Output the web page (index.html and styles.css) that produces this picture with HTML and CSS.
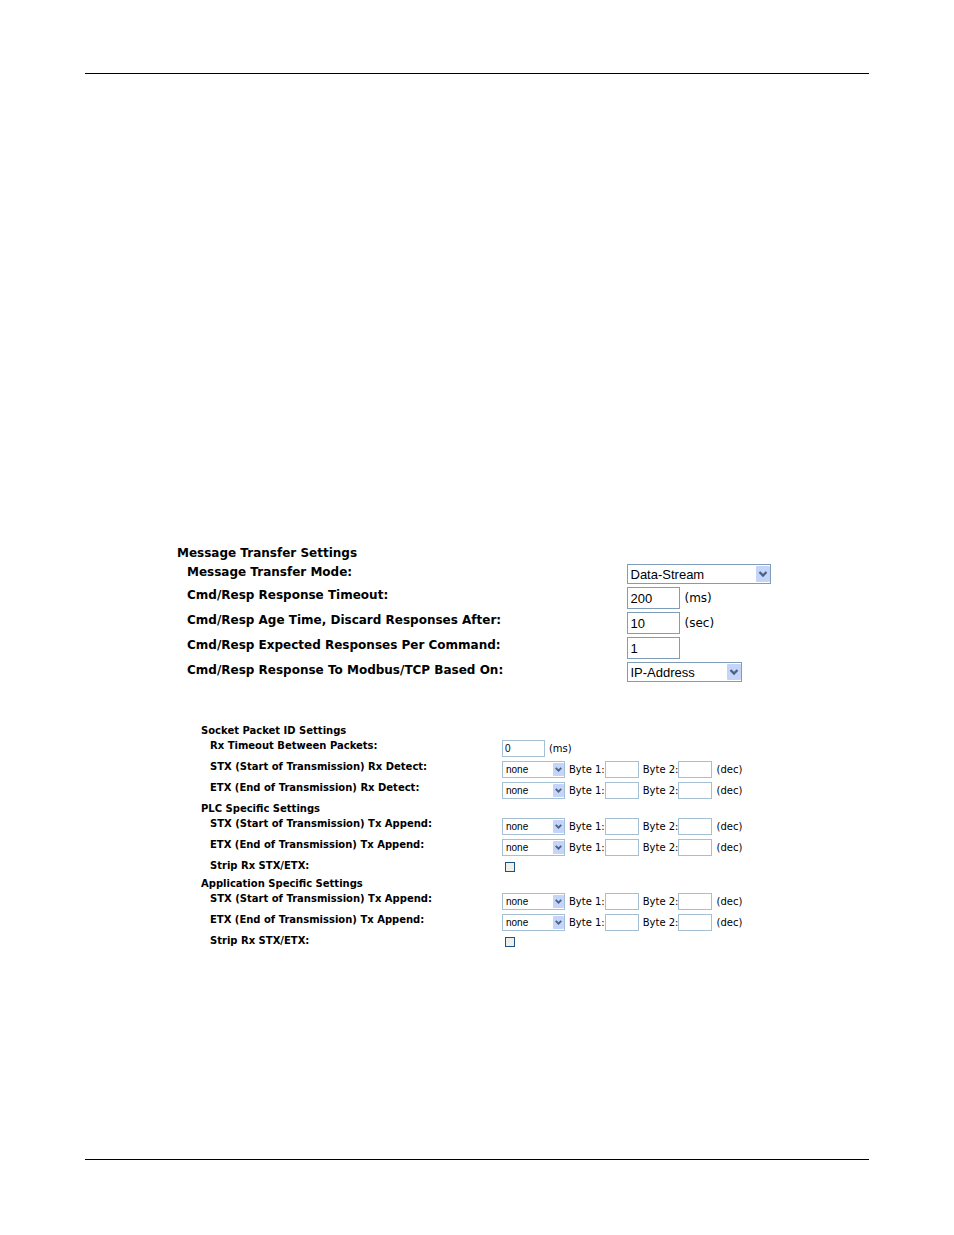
FILE: index.html
```html
<!DOCTYPE html>
<html lang="en">
<head>
    <meta charset="UTF-8">
    <meta name="viewport" content="width=device-width, initial-scale=1.0">
    <title>Message Transfer Settings</title>
    <link rel="stylesheet" href="styles.css">
</head>
<body>
    <svg width="0" height="0" class="symbols" aria-hidden="true">
        <symbol id="arrow" viewBox="0 0 14 16" preserveAspectRatio="none">
            <rect x="0" y="0" width="14" height="16" rx="1" fill="#c5d5fa"/>
            <path d="M3.5 6l3.5 3.5L10.500 6" fill="none" stroke="#4d6185" stroke-width="2.4"/>
        </symbol>
    </svg>

    <form class="page">
        <!-- Message transfer -->
        <section class="transfer">
            <h2>Message Transfer Settings</h2>
            <div class="row">
                <label for="mode">Message Transfer Mode:</label>
                <div class="controls">
                    <span class="drop mode"><select id="mode"><option>Data-Stream</option></select><svg><use href="#arrow"/></svg></span>
                </div>
            </div>
            <div class="row">
                <label for="timeout">Cmd/Resp Response Timeout:</label>
                <div class="controls"><input type="text" id="timeout" value="200"><span>(ms)</span></div>
            </div>
            <div class="row">
                <label for="age">Cmd/Resp Age Time, Discard Responses After:</label>
                <div class="controls"><input type="text" id="age" value="10"><span>(sec)</span></div>
            </div>
            <div class="row">
                <label for="expected">Cmd/Resp Expected Responses Per Command:</label>
                <div class="controls"><input type="text" id="expected" value="1"></div>
            </div>
            <div class="row">
                <label for="based">Cmd/Resp Response To Modbus/TCP Based On:</label>
                <div class="controls">
                    <span class="drop based"><select id="based"><option>IP-Address</option></select><svg><use href="#arrow"/></svg></span>
                </div>
            </div>
        </section>

        <!-- Packet framing -->
        <section class="packet">
            <h2>Socket Packet ID Settings</h2>
            <div class="row">
                <label for="rx-timeout">Rx Timeout Between Packets:</label>
                <div class="controls"><input type="text" id="rx-timeout" class="wide" value="0"><span>(ms)</span></div>
            </div>
            <div class="row">
                <label for="stx-rx">STX (Start of Transmission) Rx Detect:</label>
                <div class="controls">
                    <span class="drop"><select id="stx-rx"><option>none</option></select><svg><use href="#arrow"/></svg></span>
                    <label class="byte">Byte 1:<input type="text"></label>
                    <label class="byte">Byte 2:<input type="text"></label>
                    <span>(dec)</span>
                </div>
            </div>
            <div class="row">
                <label for="etx-rx">ETX (End of Transmission) Rx Detect:</label>
                <div class="controls">
                    <span class="drop"><select id="etx-rx"><option>none</option></select><svg><use href="#arrow"/></svg></span>
                    <label class="byte">Byte 1:<input type="text"></label>
                    <label class="byte">Byte 2:<input type="text"></label>
                    <span>(dec)</span>
                </div>
            </div>

            <h2>PLC Specific Settings</h2>
            <div class="row">
                <label for="plc-stx">STX (Start of Transmission) Tx Append:</label>
                <div class="controls">
                    <span class="drop"><select id="plc-stx"><option>none</option></select><svg><use href="#arrow"/></svg></span>
                    <label class="byte">Byte 1:<input type="text"></label>
                    <label class="byte">Byte 2:<input type="text"></label>
                    <span>(dec)</span>
                </div>
            </div>
            <div class="row">
                <label for="plc-etx">ETX (End of Transmission) Tx Append:</label>
                <div class="controls">
                    <span class="drop"><select id="plc-etx"><option>none</option></select><svg><use href="#arrow"/></svg></span>
                    <label class="byte">Byte 1:<input type="text"></label>
                    <label class="byte">Byte 2:<input type="text"></label>
                    <span>(dec)</span>
                </div>
            </div>
            <div class="row">
                <label for="plc-strip">Strip Rx STX/ETX:</label>
                <div class="controls"><input type="checkbox" id="plc-strip"></div>
            </div>

            <h2>Application Specific Settings</h2>
            <div class="row">
                <label for="app-stx">STX (Start of Transmission) Tx Append:</label>
                <div class="controls">
                    <span class="drop"><select id="app-stx"><option>none</option></select><svg><use href="#arrow"/></svg></span>
                    <label class="byte">Byte 1:<input type="text"></label>
                    <label class="byte">Byte 2:<input type="text"></label>
                    <span>(dec)</span>
                </div>
            </div>
            <div class="row">
                <label for="app-etx">ETX (End of Transmission) Tx Append:</label>
                <div class="controls">
                    <span class="drop"><select id="app-etx"><option>none</option></select><svg><use href="#arrow"/></svg></span>
                    <label class="byte">Byte 1:<input type="text"></label>
                    <label class="byte">Byte 2:<input type="text"></label>
                    <span>(dec)</span>
                </div>
            </div>
            <div class="row">
                <label for="app-strip">Strip Rx STX/ETX:</label>
                <div class="controls"><input type="checkbox" id="app-strip"></div>
            </div>
        </section>
    </form>
</body>
</html>
```
FILE: styles.css
```css
* {
    box-sizing: border-box;
    margin: 0;
    padding: 0;
}

body {
    display: flex;
    flex-direction: column;
    min-height: 100vh;
    padding: 73px 85px 75px;
    background-color: #fff;
    color: #000;
    font-family: "DejaVu Sans", Verdana, sans-serif;
}

.symbols {
    position: absolute;
}

.page {
    flex: 1;
    padding-top: 471px;
    border-top: 1px solid #000;
    border-bottom: 1px solid #000;
}

h2 {
    font-weight: bold;
}

.row {
    display: grid;
    align-items: start;
}

.row > label {
    font-weight: bold;
    white-space: nowrap;
}

.controls {
    display: flex;
    align-items: center;
}

input,
select {
    border: 1px solid #7f9db9;
    border-radius: 0;
    background-color: #fff;
    color: #000;
    font-family: "Liberation Sans", Arial, sans-serif;
}

select {
    appearance: none;
    width: 100%;
    height: 100%;
}

.drop {
    position: relative;
}

/* arrow button over the right end of the select */
.drop svg {
    position: absolute;
    top: 2px;
    right: 1px;
    pointer-events: none;
}

/* Message transfer */
.transfer {
    display: flex;
    flex-direction: column;
    gap: 3px;
    margin-left: 92px;
    font-size: 12px;
}

.transfer h2 {
    font-size: 12px;
    line-height: 16px;
}

.transfer .row {
    grid-template-columns: 29fr 16fr;
    margin-left: 10px;
    line-height: 17px;
}

.transfer .controls {
    gap: 5px;
}

.transfer input {
    width: 53px;
    height: 22px;
    padding: 0 3px;
    font-size: 13px;
}

.transfer .drop {
    height: 20px;
}

.transfer .mode {
    width: 144px;
}

.transfer .based {
    width: 115px;
}

.transfer select {
    padding: 0 3px;
    font-size: 13px;
}

.transfer svg {
    width: 14px;
    height: 16px;
}

/* Packet framing */
.packet {
    display: flex;
    flex-direction: column;
    gap: 4px;
    margin: 43px 0 0 116px;
    font-size: 10px;
}

.packet h2 {
    font-size: 10px;
    line-height: 11px;
}

.packet .row {
    grid-template-columns: 35fr 44fr;
    margin-left: 9px;
    line-height: 12px;
}

.packet .controls {
    gap: 4px;
}

.packet input {
    width: 34px;
    height: 17px;
    padding: 0 2px;
    border-color: #a5bfd4;
    font-size: 10px;
}

.packet .wide {
    width: 43px;
}

.packet .drop {
    width: 63px;
    height: 17px;
}

.packet select {
    padding: 0 3px;
    border-color: #a5bfd4;
    font-size: 10px;
}

.packet svg {
    width: 11px;
    height: 13px;
}

.byte {
    display: flex;
    align-items: center;
}

.packet input[type="checkbox"] {
    appearance: none;
    width: 10px;
    height: 10px;
    margin: 2px 3px;
    padding: 0;
    border-color: #1c5180;
    background-color: #eeeeea;
}

.packet input[type="checkbox"]:checked {
    background-color: #21a121;
}
```
